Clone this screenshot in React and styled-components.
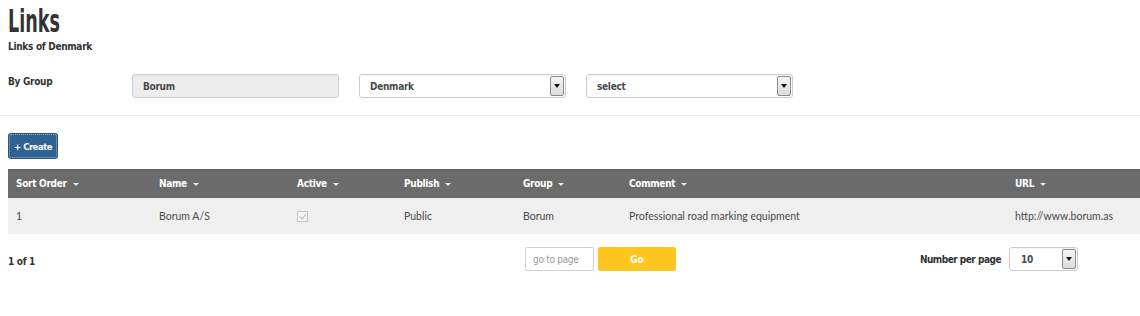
import React from "react";
import styled, { createGlobalStyle } from "styled-components";

const Global = createGlobalStyle`
  html, body { margin: 0; padding: 0; background: #fff; }
  body { font-family: "DejaVu Sans Condensed", "Liberation Sans", sans-serif; color: #333; }
  * { box-sizing: border-box; }
`;

const cond = `"DejaVu Sans Condensed", "Liberation Sans", sans-serif`;
const body = `"Lato", "Open Sans", sans-serif`;

const Page = styled.div`
  width: 1140px;
  padding-top: 4px;
`;

const Head = styled.div`
  padding: 0 8px;
  height: 51px;
`;

const Title = styled.h1`
  margin: 0;
  display: inline-block;
  font-family: ${cond};
  font-size: 32px;
  line-height: 34px;
  font-weight: 700;
  color: #333;
  transform: scaleX(0.61);
  transform-origin: left center;
`;

const Sub = styled.div`
  margin-top: 3px;
  font-family: ${cond};
  font-size: 10px;
  letter-spacing: -0.3px;
  font-weight: 700;
  color: #333;
`;

const FilterRow = styled.div`
  display: flex;
  align-items: flex-start;
  padding: 19px 8px 0 8px;
  height: 61px;
  border-bottom: 1px solid #ececec;
`;

const Label = styled.div`
  width: 124px;
  font-family: ${cond};
  font-weight: 700;
  font-size: 10px;
  letter-spacing: -0.3px;
  color: #333;
  padding-top: 2px;
`;

const Field = styled.div`
  width: 207px;
  height: 24px;
  margin-right: 20px;
  border: 1px solid ${p => (p.$disabled ? "#cfcfcf" : "#cccccc")};
  border-radius: 3px;
  background: ${p => (p.$disabled ? "#ededed" : "#fff")};
  display: flex;
  align-items: center;
  position: relative;
  padding-left: 10px;
  font-family: ${cond};
  font-weight: 700;
  font-size: 10px;
  letter-spacing: -0.3px;
  color: #4a4a4a;
  box-shadow: inset 0 1px 1px rgba(0,0,0,0.04);
`;

const Arrow = styled.div`
  position: absolute;
  right: 1px;
  top: 1px;
  bottom: 1px;
  width: 14px;
  border: 1px solid #8a8a8a;
  border-radius: 2px;
  background: linear-gradient(#f4f4f4, #dcdcdc);
  display: flex;
  align-items: center;
  justify-content: center;
  &::after {
    content: "";
    border-left: 3px solid transparent;
    border-right: 3px solid transparent;
    border-top: 4px solid #111;
  }
`;

const Toolbar = styled.div`
  padding: 18px 9px 11px 9px;
`;

const CreateBtn = styled.button`
  height: 24px;
  padding: 0 4px;
  background: #2f6193;
  border: 1px dotted #9bb2c9;
  border-radius: 2px;
  color: #fff;
  font-family: ${cond};
  font-weight: 700;
  font-size: 9.5px;
  letter-spacing: -0.5px;
  box-shadow: 0 0 0 1px #2a557f;
`;

const Table = styled.table`
  margin-left: 8px;
  width: 1132px;
  border-collapse: collapse;
  table-layout: fixed;
`;

const Th = styled.th`
  width: ${p => p.$w}px;
  height: 28px;
  background: #6b6b6b;
  color: #fff;
  text-align: left;
  padding: 0 0 0 8px;
  font-family: ${cond};
  font-weight: 700;
  font-size: 10px;
  letter-spacing: -0.3px;
  border-top: 1px solid #5e5e5e;
  white-space: nowrap;
`;

const Caret = styled.span`
  display: inline-block;
  margin-left: 6px;
  vertical-align: middle;
  border-left: 3px solid transparent;
  border-right: 3px solid transparent;
  border-top: 3px solid #e8e8e8;
`;

const Td = styled.td`
  height: 36px;
  background: #efefef;
  padding: 0 0 0 8px;
  font-family: ${body};
  font-size: 10.5px;
  color: #4a4a4a;
  white-space: nowrap;
`;

const Check = styled.span`
  display: inline-block;
  width: 11px;
  height: 11px;
  border: 1px solid #c4c4c4;
  background: #f6f6f6;
  position: relative;
  vertical-align: middle;
  &::after {
    content: "";
    position: absolute;
    left: 3px;
    top: 0px;
    width: 3px;
    height: 6px;
    border-right: 1px solid #b5b5b5;
    border-bottom: 1px solid #b5b5b5;
    transform: rotate(40deg);
  }
`;

const Pager = styled.div`
  display: flex;
  align-items: center;
  padding: 13px 62px 0 8px;
  height: 38px;
`;

const Count = styled.div`
  width: 517px;
  padding-top: 4px;
  font-family: ${cond};
  font-weight: 700;
  font-size: 10px;
  letter-spacing: -0.3px;
  color: #333;
`;

const GoInput = styled.div`
  width: 69px;
  height: 24px;
  border: 1px solid #d2d2d2;
  border-radius: 2px;
  display: flex;
  align-items: center;
  padding-left: 7px;
  font-family: ${cond};
  font-size: 10px;
  letter-spacing: -0.3px;
  color: #999;
  margin-right: 4px;
`;

const GoBtn = styled.div`
  width: 78px;
  height: 24px;
  background: #ffc61f;
  border-radius: 2px;
  color: #fff;
  display: flex;
  align-items: center;
  justify-content: center;
  font-family: ${cond};
  font-weight: 700;
  font-size: 10px;
`;

const PerLabel = styled.div`
  margin-left: auto;
  margin-right: 8px;
  white-space: nowrap;
  font-family: ${cond};
  font-weight: 700;
  font-size: 10px;
  letter-spacing: -0.5px;
  color: #333;
`;

const PerSelect = styled(Field)`
  width: 69px;
  margin-right: 0;
  padding-left: 11px;
`;

const cols = [
  { t: "Sort Order", w: 143 },
  { t: "Name", w: 138 },
  { t: "Active", w: 107 },
  { t: "Publish", w: 119 },
  { t: "Group", w: 106 },
  { t: "Comment", w: 386 },
  { t: "URL", w: 133 },
];

export default function App() {
  return (
    <>
      <Global />
      <Page>
        <Head>
          <Title>Links</Title>
          <Sub>Links of Denmark</Sub>
        </Head>
        <FilterRow>
          <Label>By Group</Label>
          <Field $disabled>Borum</Field>
          <Field>Denmark<Arrow /></Field>
          <Field>select<Arrow /></Field>
        </FilterRow>
        <Toolbar>
          <CreateBtn>+ Create</CreateBtn>
        </Toolbar>
        <Table>
          <thead>
            <tr>
              {cols.map(c => (
                <Th key={c.t} $w={c.w}>{c.t}<Caret /></Th>
              ))}
            </tr>
          </thead>
          <tbody>
            <tr>
              <Td>1</Td>
              <Td>Borum A/S</Td>
              <Td><Check /></Td>
              <Td>Public</Td>
              <Td>Borum</Td>
              <Td>Professional road marking equipment</Td>
              <Td>http://www.borum.as</Td>
            </tr>
          </tbody>
        </Table>
        <Pager>
          <Count>1 of 1</Count>
          <GoInput>go to page</GoInput>
          <GoBtn>Go</GoBtn>
          <PerLabel>Number per page</PerLabel>
          <PerSelect>10<Arrow /></PerSelect>
        </Pager>
      </Page>
    </>
  );
}
